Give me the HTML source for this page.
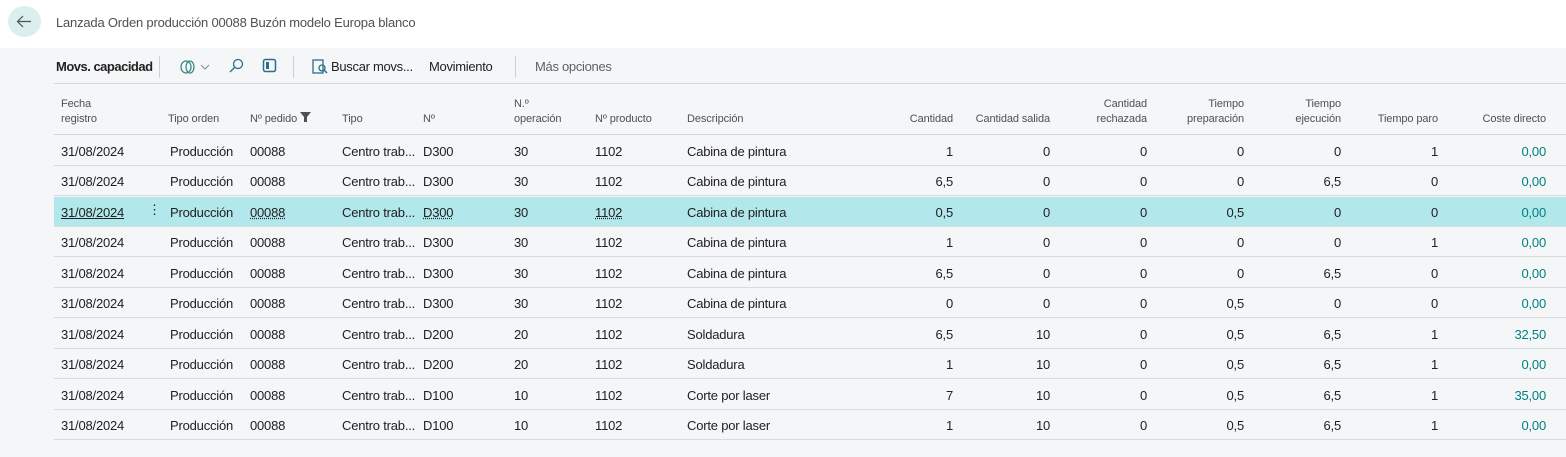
<!DOCTYPE html>
<html><head><meta charset="utf-8"><style>
*{margin:0;padding:0;box-sizing:border-box}
body{width:1566px;height:457px;overflow:hidden;background:#f5f6f8;font-family:"Liberation Sans",sans-serif;color:#212121;position:relative}
.top{position:absolute;left:0;top:0;width:1566px;height:48px;background:#fff}
.back{position:absolute;left:8px;top:6px;width:33px;height:31px;border-radius:50%;background:#dcefef}
.title{position:absolute;left:56px;top:15px;font-size:13px;color:#505050;letter-spacing:-0.2px}
.tb{position:absolute;top:59px;font-size:13px;color:#212121;letter-spacing:-0.3px}
.sep{position:absolute;top:56px;width:1px;height:22px;background:#d0d0d0}
.hline{position:absolute;left:54px;right:0;height:1px;background:#d6d6d6}
.h{position:absolute;font-size:11px;color:#505050;line-height:15px;letter-spacing:-0.1px}
.r{position:absolute;left:54px;right:0;height:30px;border-bottom:1px solid #dadbdd}
.r.sel{background:#b2e8eb}
.c{position:absolute;top:8px;font-size:13px;white-space:nowrap;letter-spacing:-0.2px}
.rt{text-align:right}
.u{text-decoration:underline dotted}
.t{color:#008080}
</style></head><body>
<div class="top"></div>
<div class="back"><svg width="33" height="31" viewBox="0 0 33 31"><path d="M23 15.5H10M15 10l-5.5 5.5L15 21" stroke="#505050" stroke-width="1.2" fill="none"/></svg></div>
<div class="title">Lanzada Orden producción 00088 Buzón modelo Europa blanco</div>
<div class="tb" style="left:56px;font-weight:bold;letter-spacing:-0.5px">Movs. capacidad</div>
<div class="sep" style="left:159px"></div>
<svg style="position:absolute;left:180px;top:59px" width="32" height="16"><ellipse cx="6" cy="8" rx="5" ry="6" fill="none" stroke="#3a8a8a" stroke-width="1.3"/><ellipse cx="10" cy="8" rx="4" ry="6" fill="none" stroke="#3a8a8a" stroke-width="1.3"/><path d="M21 6l4 4 4-4" stroke="#888" fill="none"/></svg>
<svg style="position:absolute;left:228px;top:58px" width="16" height="16"><circle cx="10" cy="6" r="4.5" fill="none" stroke="#2a6f8a" stroke-width="1.3"/><path d="M7 9l-5 5" stroke="#2a6f8a" stroke-width="1.3"/></svg>
<svg style="position:absolute;left:262px;top:58px" width="16" height="16"><rect x="1.5" y="1.5" width="12" height="12" rx="2" fill="none" stroke="#2a6f8a" stroke-width="1.5"/><rect x="4" y="4" width="3" height="7" fill="#2a6f8a"/></svg>
<div class="sep" style="left:293px"></div>
<svg style="position:absolute;left:312px;top:58px" width="16" height="16"><rect x="1" y="2" width="10" height="13" fill="none" stroke="#2a6f8a" stroke-width="1.3"/><circle cx="10" cy="10" r="3" fill="none" stroke="#2a6f8a" stroke-width="1.3"/><path d="M12 12l3 3" stroke="#2a6f8a" stroke-width="1.5"/></svg>
<div class="tb" style="left:331px">Buscar movs...</div>
<div class="tb" style="left:429px">Movimiento</div>
<div class="sep" style="left:515px"></div>
<div class="tb" style="left:535px;color:#616161">Más opciones</div>
<div class="hline" style="top:83px"></div>
<div class="h" style="left:61px;top:97px">Fecha<br>registro</div>
<div class="h" style="left:168px;top:112px">Tipo orden</div>
<div class="h" style="left:250px;top:112px">Nº pedido <svg width="11" height="10" viewBox="0 0 11 10"><path d="M0 0h11L7 5v5H4V5z" fill="#505050"/></svg></div>
<div class="h" style="left:342px;top:112px">Tipo</div>
<div class="h" style="left:423px;top:112px">Nº</div>
<div class="h" style="left:514px;top:97px">N.º<br>operación</div>
<div class="h" style="left:595px;top:112px">Nº producto</div>
<div class="h" style="left:687px;top:112px">Descripción</div>
<div class="h rt" style="right:613px;top:112px">Cantidad</div>
<div class="h rt" style="right:516px;top:112px">Cantidad salida</div>
<div class="h rt" style="right:419px;top:97px">Cantidad<br>rechazada</div>
<div class="h rt" style="right:322px;top:97px">Tiempo<br>preparación</div>
<div class="h rt" style="right:225px;top:97px">Tiempo<br>ejecución</div>
<div class="h rt" style="right:128px;top:112px">Tiempo paro</div>
<div class="h rt" style="right:20px;top:112px">Coste directo</div>
<div class="hline" style="top:134px"></div>
<div id="rows"></div>
<script>
var d=[["D300","30","Cabina de pintura","1","0","0","0","0","1","0,00"],
["D300","30","Cabina de pintura","6,5","0","0","0","6,5","0","0,00"],
["D300","30","Cabina de pintura","0,5","0","0","0,5","0","0","0,00"],
["D300","30","Cabina de pintura","1","0","0","0","0","1","0,00"],
["D300","30","Cabina de pintura","6,5","0","0","0","6,5","0","0,00"],
["D300","30","Cabina de pintura","0","0","0","0,5","0","0","0,00"],
["D200","20","Soldadura","6,5","10","0","0,5","6,5","1","32,50"],
["D200","20","Soldadura","1","10","0","0,5","6,5","1","0,00"],
["D100","10","Corte por laser","7","10","0","0,5","6,5","1","35,00"],
["D100","10","Corte por laser","1","10","0","0,5","6,5","1","0,00"]];
var rights=[613,516,419,322,225,128,20],h="";
d.forEach(function(r,i){var s=i==2,u=s?' u':'';
h+='<div class="r'+(s?' sel':'')+'" style="top:'+(135.5+i*30.5)+'px">';
h+='<div class="c" style="left:7px;'+(s?'text-decoration:underline':'')+'">31/08/2024</div>';
if(s)h+='<div class="c" style="left:94px;top:5px">&#8942;</div>';
h+='<div class="c" style="left:116px">Producción</div><div class="c'+u+'" style="left:196px">00088</div><div class="c" style="left:288px">Centro trab...</div><div class="c'+u+'" style="left:369px">'+r[0]+'</div><div class="c" style="left:460px">'+r[1]+'</div><div class="c'+u+'" style="left:541px">1102</div><div class="c" style="left:633px">'+r[2]+'</div>';
for(var k=0;k<7;k++)h+='<div class="c rt'+(k==6?' t':'')+'" style="right:'+rights[k]+'px">'+r[3+k]+'</div>';
h+='</div>';});
document.getElementById('rows').innerHTML=h;
</script>
</body></html>
